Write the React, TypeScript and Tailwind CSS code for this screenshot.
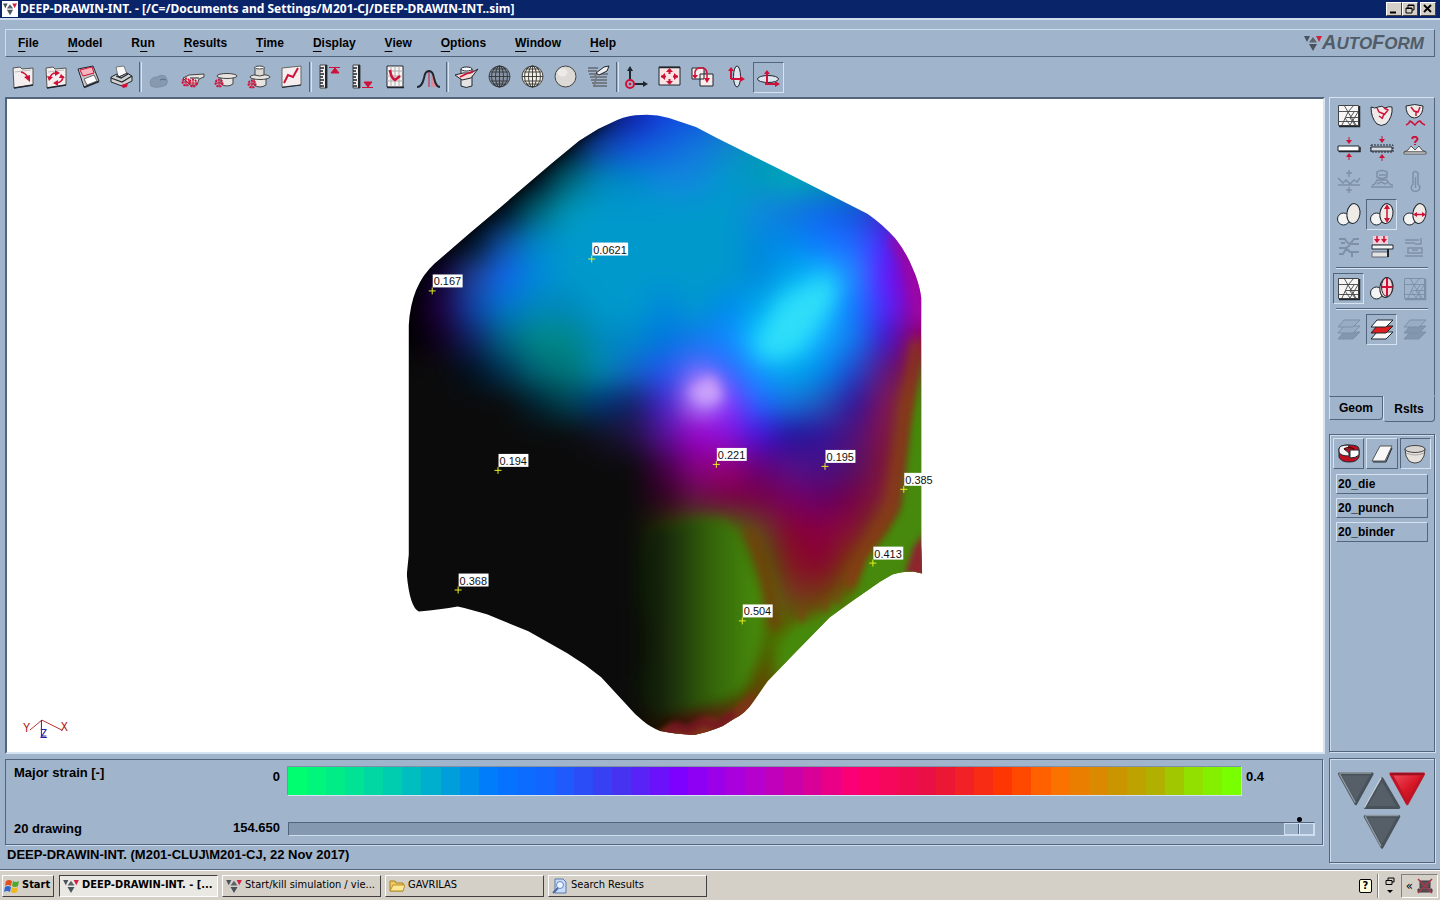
import React from 'react';

const RED = '#d01038';
const INK = '#20262e';
const DIM = '#7d90a8';

const menus = [
  { label: 'File', key: 0 },
  { label: 'Model', key: 0 },
  { label: 'Run', key: 1 },
  { label: 'Results', key: 0 },
  { label: 'Time', key: 0 },
  { label: 'Display', key: 0 },
  { label: 'View', key: 0 },
  { label: 'Options', key: 0 },
  { label: 'Window', key: 0 },
  { label: 'Help', key: 0 },
];

const Icon: React.FC<{ children: React.ReactNode }> = ({ children }) => (
  <svg viewBox="0 0 26 26" className="h-[26px] w-[26px] shrink-0" fill="none" stroke={INK} strokeWidth="1" aria-hidden="true">
    {children}
  </svg>
);

const Gear = ({ x, y }: { x: number; y: number }) => (
  <g stroke={RED}>
    <circle cx={x} cy={y} r="3.5" strokeWidth="2" strokeDasharray="2 1" />
    <path d={`M${x - 4} ${y}h8M${x} ${y - 4}v8`} />
  </g>
);

const Folder = ({ children }: { children: React.ReactNode }) => (
  <Icon>
    <path d="M3 4l7-1 2 2 11-1v17L4 24z" fill="#f4efee" stroke="#555" />
    <path d="M4 24l19-3" strokeWidth="1.5" />
    <path d="M5 8l16-2" stroke="#bbb" />
    {children}
  </Icon>
);

const Ruler = ({ up }: { up?: boolean }) => (
  <Icon>
    <path d="M3 1h7v23H3z" fill="#eee" stroke="#444" />
    <path d="M9 1v23" strokeWidth="2" />
    <path d="M3 4h4M3 7h3M3 10h4M3 13h3M3 16h4M3 19h3M3 22h4" strokeWidth="1.5" />
    {up ? (
      <path d="M12 3.500h11M14 9h8l-4-5z" stroke={RED} fill={RED} />
    ) : (
      <path d="M12 23.500h11M14 18h8l-4 5z" stroke={RED} fill={RED} />
    )}
  </Icon>
);

const Globe = ({ fill, line }: { fill: string; line: boolean }) => (
  <Icon>
    <circle cx="12.500" cy="12.500" r="10.500" fill={fill} stroke="#444" />
    {line ? (
      <g stroke="#333" strokeWidth="0.9">
        <ellipse cx="12.500" cy="12.500" rx="4" ry="10.500" />
        <ellipse cx="12.500" cy="12.500" rx="8" ry="10.500" />
        <path d="M12.500 2v21M2 12.500h21M3.500 8h18M3.500 17h18M6 5h13M6 20h13" />
      </g>
    ) : (
      <ellipse cx="9.500" cy="8.500" rx="5" ry="4" fill="#eceae8" stroke="none" />
    )}
  </Icon>
);

const Mesh = ({ dim }: { dim?: boolean }) => (
  <Icon>
    <path d="M2.500 2.500h20v20h-20z" fill={dim ? 'none' : '#f6f6f6'} stroke={dim ? DIM : '#444'} />
    <path
      d="M2 8.500h20M10 14.500h12M2 18.500h20M8 2l4 7-6 13M18 2l-6 7M12 9l8 13M22 9l-8 13M18 9l-4 6 5 7M9 15l5 7"
      stroke={dim ? DIM : '#444'}
      strokeWidth="0.9"
    />
    <path d="M23.500 3v20.500H3" strokeWidth="1.500" stroke={dim ? DIM : INK} />
  </Icon>
);

const Balls = ({ children }: { children?: React.ReactNode }) => (
  <Icon>
    <circle cx="7.500" cy="17" r="6" fill="#f4f4f4" />
    <ellipse cx="17.500" cy="11.500" rx="6.500" ry="10" fill="#eeeae6" transform="rotate(8 17 11)" />
    {children}
  </Icon>
);

const Layers = ({ mid, dim }: { mid: string; dim?: boolean }) => (
  <Icon>
    <g stroke={dim ? DIM : INK}>
      <path d="M2 22l6-7h16l-7 7z" fill={dim ? '#8398af' : '#f6f6f6'} />
      <path d="M2 16l6-7h16l-7 7z" fill={mid} />
      <path d="M2 10l6-7h16l-7 7z" fill={dim ? '#98acc4' : '#fff'} />
    </g>
  </Icon>
);

const Cup = ({ y, w }: { y: number; w: number }) => (
  <g stroke="#444" fill="#e8e4e2">
    <path d={`M8 ${y}v8q6 4 12 0v-8z`} />
    <ellipse cx="14" cy={y} rx={w} ry="2.500" />
  </g>
);

interface Tool {
  name: string;
  icon: React.ReactNode;
  sunken?: boolean;
}

const toolGroups: Tool[][] = [
  [
    { name: 'Open', icon: <Folder><path d="M11 8q5 1 7 6" stroke={RED} strokeWidth="1.500" /><path d="M14 13l6-2v7z" fill={RED} stroke="none" /></Folder> },
    { name: 'Reload', icon: <Folder><path d="M7 14q1-5 6-5M20 12q0 6-6 7" stroke={RED} strokeWidth="1.500" /><path d="M12 6l5 3-5 3zM15 22l-5-3 5-3zM4 12l6 1-4 4zM18 10l4 4-6 0z" fill={RED} stroke="none" /></Folder> },
    {
      name: 'Save',
      icon: (
        <Icon>
          <path d="M2 5l15-3 6 15-15 6z" fill="#c9c4c6" />
          <path d="M4 6l12-3 2 6-11 3z" fill="#f6b4be" stroke={RED} />
          <path d="M8 15l10-4 3 6-10 4z" fill="#fff" stroke="#666" />
          <path d="M8 23.500l15-6" strokeWidth="1.500" />
        </Icon>
      ),
    },
    {
      name: 'Print',
      icon: (
        <Icon>
          <path d="M7 3l8-1 3 8-9 3z" fill="#f8f8f8" stroke="#777" />
          <path d="M2 13l6-3 2 3 8-4 5 3v5l-10 5-11-4z" fill="#d0d0d0" />
          <path d="M2 14l11 4 10-6M7 12l5 2 7-4" strokeWidth="1.200" />
          <path d="M12 21l7-2-1 4-4 1z" fill={RED} stroke="none" />
        </Icon>
      ),
    },
  ],
  [
    { name: 'Blank', icon: <Icon><path d="M3 18q1-5 7-5 4-3 8-1 4 5 1 9-9 4-15 1z" fill="#8699ae" stroke={DIM} /><path d="M13 16q3-2 6 0" stroke="#5d6e82" /></Icon> },
    { name: 'Draw tool', icon: <Icon><path d="M3 14l6-3 15-1v3l-5 2-2 6h-7z" fill="#e8e4e2" stroke="#444" /><path d="M10 14h9" /><Gear x={6} y={18} /><Gear x={13} y={19} /></Icon> },
    { name: 'Binder', icon: <Icon><Cup y={12} w={10} /><Gear x={6} y={19} /></Icon> },
    { name: 'Punch', icon: <Icon><Cup y={13} w={10} /><path d="M9 3h9v8q-4 2-9 0z" fill="#dcd8d4" stroke="#444" /><ellipse cx="13.500" cy="3.500" rx="4.500" ry="1.500" fill="#fff" stroke="#444" /><Gear x={6} y={20} /></Icon> },
    { name: 'Curve', icon: <Icon><path d="M3 4l19-2v19L3 23z" fill="#f4eeee" stroke="#666" /><path d="M3 23.500l19-2.500" /><path d="M5 19l4-8 5 2 5-9" stroke={RED} strokeWidth="2" /></Icon> },
  ],
  [
    { name: 'Maximum', icon: <Ruler up /> },
    { name: 'Minimum', icon: <Ruler /> },
    {
      name: 'Forming limit',
      icon: (
        <Icon>
          <path d="M4 2h16v21H4z" fill="#f8f4f4" />
          <path d="M8 2v21M12 2v21M16 2v21M4 7h16M4 12h16M4 17h16" stroke="#aaa" />
          <path d="M7 6q1 8 5 10l5-4" stroke={RED} strokeWidth="2.500" />
          <path d="M4 23.500h17" strokeWidth="1.500" />
        </Icon>
      ),
    },
    { name: 'Distribution', icon: <Icon><path d="M15 8v15h6z" fill="#e08c98" stroke="none" /><path d="M13 6v17" stroke={RED} /><path d="M1 23q5 0 7-9 1-7 5-7t5 7q2 9 6 9" strokeWidth="2" /></Icon> },
  ],
  [
    { name: 'Section', icon: <Icon><path d="M7 5v17q5 3 11 0V5" fill="#e4e4e4" /><ellipse cx="12.500" cy="5" rx="5.500" ry="2" fill="#fff" /><path d="M1 11l8-2 8 0 7-4-7 9-9 2z" fill="#f2dcd8" /><path d="M6 13l6-3 8-3" stroke={RED} strokeWidth="1.500" /></Icon> },
    { name: 'Shaded mesh', icon: <Globe fill="#8593a4" line /> },
    { name: 'Mesh', icon: <Globe fill="#f4f0e0" line /> },
    { name: 'Shaded', icon: <Globe fill="#dddad6" line={false} /> },
    { name: 'Light', icon: <Icon><path d="M2 4h10M2 7h9M3 10h19M4 13h17M5 16h16M6 19h15M7 22h14" stroke="#444" /><path d="M10 9l8-6 5-1-2 5-8 4z" fill="#f0eeee" /><path d="M7 10q4 1 3 5l-2 8" stroke="#777" strokeWidth="1.500" /></Icon> },
  ],
  [
    { name: 'Axes', icon: <Icon><path d="M6 16V5M10 20h10" strokeWidth="2" /><path d="M3 7h6L6 2zM19 17v6l5-3z" fill={INK} stroke="none" /><circle cx="6" cy="20" r="4" stroke={RED} strokeWidth="2" /><circle cx="6" cy="20" r="1" fill={RED} stroke={RED} /></Icon> },
    { name: 'Fit', icon: <Icon><path d="M2 3h21v18H2z" fill="#f8e4e4" /><path d="M2 3.500h21" strokeWidth="1.500" /><path d="M12.500 6v4M12.500 15v4M4 12.500h5M16 12.500h5" stroke={RED} strokeWidth="2" /><path d="M9 8h7l-3.500-4zM9 17h7l-3.500 4zM8 9v7l-4-3.500zM17 9v7l4-3.500z" fill={RED} stroke="none" /></Icon> },
    { name: 'Pan', icon: <Icon><path d="M2 4h12v11H2zM10 10h13v12H10z" fill="#f8ecec" /><path d="M5 12V8q1-4 5-4h3q4 1 4 6v6" stroke={RED} strokeWidth="1.500" /><path d="M2 11h6l-3 4zM14 14h6l-3 5z" fill={RED} stroke="none" /></Icon> },
    { name: 'Rotate', icon: <Icon><ellipse cx="14" cy="12.500" rx="3.500" ry="10.500" fill="#dfe6ee" /><path d="M8 15V6M8 15h11" stroke={RED} strokeWidth="2" /><path d="M5 7h6L8 3zM17 12v6l5-3z" fill={RED} stroke="none" /></Icon> },
    { name: 'Spin', sunken: true, icon: <Icon><ellipse cx="12" cy="15" rx="10.500" ry="3.500" fill="#dfe6ee" /><path d="M11 19V9M9 20h11" stroke={RED} strokeWidth="2" /><path d="M8 10h6l-3-4zM19 17v6l5-3z" fill={RED} stroke="none" /></Icon> },
  ],
];

const resultTools: Tool[] = [
  { name: 'Mesh grid', icon: <Mesh /> },
  { name: 'Failure', icon: <Icon><path d="M2 4q4 2 7 0 4-2 7 1 4-2 7-1 1 10-6 17-5 3-9 0Q2 15 2 4z" fill="#eeeae8" /><path d="M8 5l2 4 5 2-2 5M15 5l4 2-4 5M10 13l3 2" stroke={RED} strokeWidth="1.500" /></Icon> },
  { name: 'Wrinkles', icon: <Icon><path d="M4 3q9-3 17 0 0 8-5 11-4 2-7 0-5-3-5-11z" fill="#eeeae8" /><path d="M9 4l3 4 4 1 2-5M14 9v4" stroke={RED} strokeWidth="1.500" /><path d="M4 22q3-1 4-4 2 1 5 4 3-4 5-4 2 3 5 4" stroke={RED} strokeWidth="1.500" /></Icon> },
  { name: 'Thickness', icon: <Icon><path d="M2 10h21v5H2z" fill="#fff" /><path d="M3 15.500h21V11" strokeWidth="1.500" /><path d="M13 1v6M13 18v6" stroke={RED} /><path d="M10 4h6l-3 4zM10 21h6l-3-4z" fill={RED} stroke="none" /></Icon> },
  { name: 'Thinning', icon: <Icon><path d="M2 9h22v7H2z" strokeDasharray="2 1" /><path d="M2 11h21v4H2z" fill="#d8dde4" /><path d="M13 0v6M13 19v6" stroke={RED} /><path d="M10 3h6l-3 4zM10 22h6l-3-4z" fill={RED} stroke="none" /></Icon> },
  { name: 'Formability', icon: <Icon><path d="M2 16h22l-4-2-3-4-4 4-4-4-3 4z" fill="#f4f4f4" stroke="#555" /><path d="M2 16h22v2H2z" fill="#fff" stroke="#555" /><path d="M10 3q1-3 4-2 3 2 0 4-1 1-1 2M13 8v1" stroke={RED} strokeWidth="2" /></Icon> },
  { name: 'Sheet contact', icon: <Icon><path d="M2 9l5 5 3-3 4 4 4-4 3 2 3-4M2 16h22M13 1v7M13 18v6M10 4h6M10 21h6" stroke={DIM} strokeWidth="1.500" /></Icon> },
  { name: 'Pressure', icon: <Icon><path d="M8 3q5-3 10 0v5q-5 3-10 0zM3 16q3 0 5-5h10q2 5 6 5M2 18h22M10 6h7M8 15l4-2 4 2 3-2" stroke={DIM} strokeWidth="1.500" /></Icon> },
  { name: 'Temperature', icon: <Icon><path d="M11 4q2-3 5 0v11q3 3 1 6-4 3-7 0-2-3 1-6zM13.500 8v11" stroke={DIM} strokeWidth="1.500" /></Icon> },
  { name: 'Strain', icon: <Balls /> },
  { name: 'Major strain', sunken: true, icon: <Balls><path d="M18 4v15" stroke={RED} strokeWidth="1.500" /><path d="M15 7h6l-3-5zM15 16h6l-3 5z" fill={RED} stroke="none" /></Balls> },
  { name: 'Minor strain', icon: <Balls><path d="M14 12.500h8" stroke={RED} strokeWidth="1.500" /><path d="M15 10v5l-4-2.500zM20 10v5l4-2.500z" fill={RED} stroke="none" /></Balls> },
  { name: 'Material flow', icon: <Icon><path d="M3 4h6q2 5 7 5h7M14 10l-4 3H3M23 4h-5l-3 4M10 13l4 4h9M3 19h4l3-5M16 16v6M5 8h4" stroke={DIM} strokeWidth="2" /></Icon> },
  { name: 'Forces', icon: <Icon><path d="M4 1h15v8H4z" fill="#f6d0d6" stroke="none" /><path d="M8 1v6M15 1v6" stroke={RED} strokeWidth="1.500" /><path d="M5 4h6l-3 4zM12 4h6l-3 4z" fill={RED} stroke="none" /><path d="M3 10h21v4H3z" fill="#f4f4f4" /><path d="M3 17h16v5H3z" fill="#e4e4e4" stroke="#667" /><path d="M19 14v8" strokeWidth="2" /></Icon> },
  { name: 'Draw-in', icon: <Icon><path d="M3 5h14M3 8h10M19 3v6h-6M6 13h14v5H6zM3 21h18M10 15h6" stroke={DIM} strokeWidth="1.500" /></Icon> },
];

const displayTools: Tool[] = [
  { name: 'Show mesh', sunken: true, icon: <Mesh /> },
  { name: 'Principal strain', icon: <Balls><ellipse cx="18" cy="11" rx="5.500" ry="9.500" fill="#fbd8dc" /><path d="M18 2v18M12.500 11h11" stroke={RED} strokeWidth="2" /></Balls> },
  { name: 'Hide mesh', icon: <Mesh dim /> },
];

const layerTools: Tool[] = [
  { name: 'Lower layer', icon: <Layers mid="#98acc4" dim /> },
  { name: 'Middle layer', sunken: true, icon: <Layers mid="#e02020" /> },
  { name: 'Upper layer', icon: <Layers mid="#8398af" dim /> },
];

const partTools: Tool[] = [
  { name: 'Die', icon: <Icon><path d="M3 8q0-4 10-4t10 4v8q-2 5-10 5T3 16z" fill="#c01020" /><path d="M3 8q0-4 10-4l-1 4H8l5 4v3Q4 15 3 11z" fill="#f4f4f4" /><path d="M14 9h9v5q-3 3-9 3z" fill="#fff" /><path d="M8 8q5-3 10 0" stroke="#600" strokeWidth="1.500" /></Icon> },
  { name: 'Sheet', icon: <Icon><path d="M3 20l8-15h12l-7 15z" fill="#f8f8f8" stroke="#555" /><path d="M4 21h13l6-14" /></Icon> },
  { name: 'Punch part', sunken: true, icon: <Icon><path d="M3 8q0 8 4 12 6 4 12 0 4-4 4-12z" fill="#e6e2de" stroke="#444" /><ellipse cx="13" cy="8" rx="10" ry="3.500" fill="#d8d4d0" stroke="#444" /><path d="M4 12q9 4 18 0" stroke="#aaa" /></Icon> },
];

const ToolButton: React.FC<{ tool: Tool }> = ({ tool }) => (
  <button
    type="button"
    aria-label={tool.name}
    className={`mx-px flex h-[31px] w-[31px] items-center justify-center border ${
      tool.sunken ? 'border-t-[#53657d] border-r-[#d6e4f2] border-b-[#d6e4f2] border-l-[#53657d]' : 'border-transparent'
    }`}
  >
    {tool.icon}
  </button>
);

const Triangles = ({ className }: { className: string }) => (
  <svg viewBox="0 0 18 16" className={className} aria-hidden="true">
    <path d="M0 1h6L3 7z" fill="#4a525c" />
    <path d="M12 1h6l-3 6z" fill="#d02040" />
    <path d="M5 7.500h8L9 2z" fill="#5a626c" />
    <path d="M5 9h8l-4 7z" fill="#4a525c" />
  </svg>
);

const TitleBar = () => (
  <header className="flex h-[18px] items-center bg-[#0a246a] pr-1 pl-[2px] text-white">
    <span className="flex h-4 w-4 items-center justify-center bg-white">
      <Triangles className="h-3.5 w-3.5" />
    </span>
    <h1 className="ml-[2px] flex-1 font-['Noto_Sans','Open_Sans',sans-serif] text-[12px] leading-4 font-bold">
      DEEP-DRAWIN-INT. - [/C=/Documents and Settings/M201-CJ/DEEP-DRAWIN-INT..sim]
    </h1>
    {['Minimize', 'Restore', 'Close'].map(name => (
      <button
        key={name}
        type="button"
        aria-label={name}
        className={`flex h-[14px] w-4 items-center justify-center border border-t-white border-r-[#404040] border-b-[#404040] border-l-white bg-[#d4d0c8] ${
          name === 'Close' ? 'ml-[2px]' : ''
        }`}
      >
        <svg viewBox="0 0 12 10" className="h-[10px] w-3" fill="none" stroke="#000" aria-hidden="true">
          {name === 'Minimize' && <path d="M2 8.500h6" strokeWidth="2" />}
          {name === 'Restore' && <path d="M4 4V1h6v5H8M2 4h6v5H2zM4 1.500h6M2 4.500h6" />}
          {name === 'Close' && <path d="M2 1l7 7M9 1L2 8" strokeWidth="1.800" />}
        </svg>
      </button>
    ))}
  </header>
);

const MenuBar = () => (
  <nav className="mx-[5px] mt-[9px] flex h-7 items-center border border-t-[#cfdeee] border-r-[#53657d] border-b-[#53657d] border-l-[#cfdeee] pr-[10px] pl-3">
    <div className="flex flex-1 gap-[29px]">
      {menus.map(({ label, key }) => (
        <button key={label} type="button" className="font-bold">
          {label.slice(0, key)}
          <span className="underline decoration-1 underline-offset-4">{label[key]}</span>
          {label.slice(key + 1)}
        </button>
      ))}
    </div>
    <Triangles className="h-4 w-[18px]" />
    <span className="text-[20px] leading-6 font-bold text-[#505c68] italic">
      A<span className="text-[17px]">UTO</span>F<span className="text-[17px]">ORM</span>
    </span>
  </nav>
);

const ToolBar = () => (
  <div className="flex h-[40px] items-center pl-[6px]">
    {toolGroups.map((group, i) => (
      <React.Fragment key={i}>
        {i > 0 && <div className="mx-px h-[30px] w-[3px] border-r border-l border-r-[#d6e4f2] border-l-[#53657d]" />}
        {group.map(tool => (
          <ToolButton key={tool.name} tool={tool} />
        ))}
      </React.Fragment>
    ))}
  </div>
);

const markers = [
  { x: 591, y: 258, value: '0.0621' },
  { x: 431, y: 290, value: '0.167' },
  { x: 497, y: 470, value: '0.194' },
  { x: 457, y: 590, value: '0.368' },
  { x: 716, y: 464, value: '0.221' },
  { x: 825, y: 466, value: '0.195' },
  { x: 904, y: 489, value: '0.385' },
  { x: 873, y: 563, value: '0.413' },
  { x: 742, y: 621, value: '0.504' },
];

const OUTLINE =
  'M641 114Q655 113 669 117L696 126L717 137L779 168L868 213Q884 224 896 238Q907 252 913 267Q920 282 922 297V545L923 574L914 572Q902 572 893 575Q880 582 868 591L855 600L830 618L792 657L768 682L754 702Q746 714 734 720L723 727Q706 734 694 736Q675 735 660 732Q650 728 643 722L635 715L626 705L601 678Q585 665 567 654L528 632L487 615Q470 610 457 607Q440 610 418 612Q409 608 406 575L408 555V325Q410 285 434 263L470 232L496 210L551 163L579 140L598 128L617 119Q629 114 641 114Z';

// shaded strain colours sampled on a 32 unit grid, first point at (408, 115)
const STEP = 32;
const UNLIT = '---';
const field = [
  '000 000 000 000 000 000 014 12a 14d 15d 16c 18b 18b 18b 18b 18b 18b',
  '000 000 000 000 000 012 14a 15d 16d 17d 18c 09b 09b 09a 09a 09a 09a',
  '000 000 000 000 012 067 08b 08c 18d 18d 09c 09b 0ab 09a 089 089 089',
  '000 000 000 012 067 09b 09c 09c 09c 09c 09c 18d 17d 16e 15d 42b 42b',
  '000 000 012 15a 08c 09c 09c 09c 09c 09c 09c 08d 08e 17f 26f 52f 708',
  '000 103 249 16e 08d 09c 09c 09c 09c 09c 09c 08d 0ae 1bf 28f 61f 909',
  '000 204 14a 07c 08b 08b 09c 09c 08d 09c 08e 0ae 2df 1bf 17f 52f 90a',
  '000 102 126 068 088 088 08b 08c 07d 17e 18f 1cf 2df 1af 17e 41c 905',
  '--- --- 012 035 067 077 08a 16c 25e 66f 36f 19f 0ae 08e 24c 617 813',
  '--- --- --- --- 023 045 037 126 42c a6e 83f 26f 17d 25b 319 815 750',
  '--- --- --- --- --- --- 112 214 519 90c 81d 41d 219 319 517 814 560',
  '--- --- --- --- --- --- --- --- 404 808 907 607 518 418 516 813 570',
  '--- --- --- --- --- --- --- --- 302 614 704 704 706 606 704 823 480',
  '--- --- --- --- --- --- --- --- 230 360 470 642 803 804 813 650 480',
  '--- --- --- --- --- --- --- --- 130 250 370 460 812 803 740 480 480',
  '--- --- --- --- --- --- --- --- 130 250 370 480 732 731 570 480 480',
  '--- --- --- --- --- --- --- --- 120 250 370 470 560 570 480 480 480',
  '--- --- --- --- --- --- --- --- 120 250 370 550 480 480 480 480 480',
  '--- --- --- --- --- --- --- --- 130 250 360 640 640 640 640 640 640',
  '--- --- --- --- --- --- --- --- 210 511 621 640 640 640 640 640 640',
].map(row => row.split(' '));

const FieldCells = () => {
  const cells: React.ReactNode[] = [];
  // one extra ring on every side keeps the blur from fading at the border
  for (let j = -1; j <= field.length; j++) {
    const row = field[Math.min(Math.max(j, 0), field.length - 1)];
    for (let i = -1; i <= row.length; i++) {
      const color = row[Math.min(Math.max(i, 0), row.length - 1)];
      cells.push(
        <rect
          key={`${i},${j}`}
          x={392 + i * STEP}
          y={99 + j * STEP}
          width={STEP + 1}
          height={STEP + 1}
          fill={color === UNLIT ? '#0b0b0b' : `#${color}`}
        />
      );
    }
  }
  return <>{cells}</>;
};

const Blur = ({ id, size }: { id: string; size: number }) => (
  <filter id={id} filterUnits="userSpaceOnUse" x="300" y="0" width="760" height="860" colorInterpolationFilters="sRGB">
    <feGaussianBlur stdDeviation={size} />
  </filter>
);

const StrainModel = () => (
  <svg viewBox="6 98 1318 655" className="absolute inset-0 h-full w-full" role="img" aria-label="Major strain on the drawn part">
    <defs>
      <clipPath id="part">
        <path d={OUTLINE} />
      </clipPath>
      <Blur id="soft" size={14} />
      <Blur id="b3" size={3} />
      <Blur id="b6" size={6} />
      <Blur id="b10" size={10} />
      <linearGradient id="corner" gradientUnits="userSpaceOnUse" x1="644" y1="0" x2="755" y2="0">
        <stop offset="0" stopColor="#0c100a" />
        <stop offset="0.25" stopColor="#1c300c" />
        <stop offset="0.6" stopColor="#34640a" />
        <stop offset="1" stopColor="#46890c" />
      </linearGradient>
    </defs>

    <g clipPath="url(#part)">
      <g filter="url(#soft)">
        <FieldCells />
      </g>

      {/* stretched corner and flange */}
      <path d="M748 530Q768 575 774 630" stroke="#74400c" strokeWidth="14" fill="none" filter="url(#b6)" />
      <path d="M650 532L695 520Q730 516 740 536Q757 570 764 620Q762 660 744 690Q715 706 650 716z" fill="url(#corner)" filter="url(#b6)" />
      <path d="M918 340L904 430L893 505L870 545L848 588" stroke="#8a3a18" strokeWidth="12" fill="none" filter="url(#b6)" />
      <path d="M924 350L912 430L903 510L888 535L868 560L858 590L845 606L930 590z" fill="#46890c" filter="url(#b3)" />
      <path d="M780 645L795 625L818 618L850 590L840 625L775 690z" fill="#468a0c" filter="url(#b6)" />
      <path d="M926 532L914 548L906 574L926 580z" fill="#8e2430" filter="url(#b3)" />
      <path d="M655 735L672 725L690 730L706 718L722 723L738 706L756 690L750 725L695 745z" fill="#7e3418" filter="url(#b3)" />
      <path d="M664 738L676 726L686 732L704 722L716 728L734 714" stroke="#741024" strokeWidth="6" fill="none" filter="url(#b3)" />
      <path d="M802 606V622M826 596V612M838 590V604" stroke="#7a4412" strokeWidth="5" filter="url(#b3)" />

      {/* highlights */}
      <ellipse cx="798" cy="318" rx="52" ry="18" fill="#30def8" filter="url(#b10)" transform="rotate(-47 798 318)" />
      <ellipse cx="706" cy="392" rx="17" ry="19" fill="#b888fa" filter="url(#b10)" />
      <path d="M712 376L722 398L704 404L690 392z" fill="#caa2fa" filter="url(#b6)" />
      <path d="M893 236Q916 262 921 320" stroke="#a008a0" strokeWidth="10" fill="none" filter="url(#b6)" />

      {/* edge turning away from the light */}
      <path d="M604 116L575 136L545 161L490 208L430 256L408 290" stroke="#03040a" strokeWidth="10" fill="none" filter="url(#b6)" />
    </g>

    {markers.map(({ x, y, value }) => (
      <g key={value}>
        <path d={`M${x - 3} ${y + 0.5}h7M${x + 0.5} ${y - 3}v7`} stroke="#e8f020" />
        <rect x={x + 1} y={y - 16} width={value.length * 6} height="13" fill="#fff" />
        <text x={x + 2} y={y - 5} fontSize="11" fill="#111">
          {value}
        </text>
      </g>
    ))}

    {/* axis triad */}
    <path d="M28 731L40 721L60 731" stroke="#b83030" fill="none" />
    <path d="M39.500 721v16h5" stroke="#2020a0" fill="none" />
    <g fontSize="12" className="font-['Liberation_Mono',monospace]">
      <text x="21" y="733" fill="#b02020">Y</text>
      <text x="59" y="732" fill="#b02020">X</text>
      <text x="38" y="739" fill="#2020a0">Z</text>
    </g>
  </svg>
);

const stops: [number, number[]][] = [
  [0, [0, 255, 112]],
  [0.05, [0, 232, 140]],
  [0.1, [0, 205, 175]],
  [0.15, [0, 170, 210]],
  [0.21, [0, 120, 255]],
  [0.27, [20, 100, 255]],
  [0.34, [64, 56, 240]],
  [0.41, [128, 0, 255]],
  [0.48, [176, 0, 215]],
  [0.54, [208, 0, 160]],
  [0.6, [255, 0, 112]],
  [0.68, [232, 16, 64]],
  [0.76, [255, 56, 0]],
  [0.81, [255, 112, 0]],
  [0.87, [208, 144, 0]],
  [0.92, [176, 176, 0]],
  [0.96, [144, 225, 0]],
  [1, [120, 255, 0]],
];

const BANDS = 50;

function bandColor(t: number) {
  const i = Math.max(1, stops.findIndex(([pos]) => pos >= t));
  const [p0, c0] = stops[i - 1];
  const [p1, c1] = stops[i];
  const f = (t - p0) / (p1 - p0);
  return `rgb(${c0.map((c, k) => Math.round(c + (c1[k] - c) * f)).join(',')})`;
}

const LegendPanel = () => (
  <section className="mt-[5px] mr-[2px] flex h-[86px] flex-col justify-between border border-[#53657d] pt-[6px] pr-[7px] pb-2 pl-2 text-[13px] shadow-[1px_1px_0_#cfdeee]">
    <div className="flex">
      <div className="w-[170px] leading-[14px]">Major strain [-]</div>
      <div className="w-[96px] pt-[4px] text-right leading-[14px]">0</div>
      <div className="ml-[7px] flex h-[30px] flex-1 border border-t-[#7d90a8] border-r-[#d6e4f2] border-b-[#d6e4f2] border-l-[#7d90a8]">
        {Array.from({ length: BANDS }, (_, i) => (
          <div key={i} className="flex-1" style={{ background: bandColor(i / (BANDS - 1)) }} />
        ))}
      </div>
      <div className="w-[73px] pt-[4px] pl-1 leading-[14px]">0.4</div>
    </div>
    <div className="flex items-end">
      <label htmlFor="time" className="w-[170px] leading-[14px]">
        20 drawing
      </label>
      <div className="w-[96px] text-right leading-[16px]">154.650</div>
      <div className="ml-2 flex flex-1 flex-col items-end">
        <span className="mr-[13px] h-[5px] w-[5px] rounded-full bg-black" />
        <input
          id="time"
          type="range"
          min="0"
          max="154.65"
          step="0.01"
          defaultValue="154.65"
          className="block h-[14px] w-full appearance-none border border-t-[#53657d] border-r-[#cfdeee] border-b-[#cfdeee] border-l-[#53657d] bg-[#8499b0] [&::-webkit-slider-thumb]:h-[12px] [&::-webkit-slider-thumb]:w-[30px] [&::-webkit-slider-thumb]:appearance-none [&::-webkit-slider-thumb]:border [&::-webkit-slider-thumb]:border-[#cfdeee] [&::-webkit-slider-thumb]:bg-[linear-gradient(90deg,#a0b4cb_13px,#53657d_13px,#53657d_14px,#d6e4f2_14px,#d6e4f2_15px,#a0b4cb_15px)]"
        />
      </div>
    </div>
  </section>
);

const ToolGrid = ({ tools }: { tools: Tool[] }) => (
  <div className="grid grid-cols-3 gap-y-[2px]">
    {tools.map(tool => (
      <ToolButton key={tool.name} tool={tool} />
    ))}
  </div>
);

const Divider = () => <hr className="mx-1 my-1 h-[2px] border-t border-b border-t-[#53657d] border-b-[#d6e4f2]" />;

const SidePanel = () => (
  <aside className="mr-[5px] ml-1 flex w-[106px] flex-col pb-[6px]">
    <section className="flex h-[299px] flex-col border border-t-[#d6e4f2] border-r-[#53657d] border-b-transparent border-l-[#d6e4f2] px-[2px] pt-[2px]">
      <ToolGrid tools={resultTools} />
      <Divider />
      <ToolGrid tools={displayTools} />
      <Divider />
      <ToolGrid tools={layerTools} />
    </section>
    <div role="tablist" className="flex h-[26px] items-start font-bold">
      <button
        type="button"
        role="tab"
        aria-selected="false"
        className="h-6 w-[54px] rounded-br border border-t-[#53657d] border-r-[#53657d] border-b-[#53657d] border-l-[#d6e4f2]"
      >
        Geom
      </button>
      <button
        type="button"
        role="tab"
        aria-selected="true"
        className="h-[26px] flex-1 rounded-b border border-t-transparent border-r-[#53657d] border-b-[#53657d] border-l-[#d6e4f2]"
      >
        Rslts
      </button>
    </div>
    <section className="mt-3 flex flex-1 flex-col border border-[#53657d] px-[2px] pt-[3px] shadow-[inset_1px_1px_0_#cfdeee,1px_1px_0_#cfdeee]">
      <div className="grid grid-cols-3">
        {partTools.map(tool => (
          <button
            key={tool.name}
            type="button"
            aria-label={tool.name}
            className={`mx-px flex h-[31px] items-center justify-center border ${
              tool.sunken
                ? 'border-t-[#53657d] border-r-[#d6e4f2] border-b-[#d6e4f2] border-l-[#53657d]'
                : 'border-t-[#d6e4f2] border-r-[#53657d] border-b-[#53657d] border-l-[#d6e4f2]'
            }`}
          >
            {tool.icon}
          </button>
        ))}
      </div>
      <div className="mx-1 mt-[5px] flex flex-col gap-1">
        {['20_die', '20_punch', '20_binder'].map(part => (
          <button
            key={part}
            type="button"
            className="h-5 border border-t-[#d6e4f2] border-r-[#53657d] border-b-[#53657d] border-l-[#d6e4f2] pl-px text-left font-bold"
          >
            {part}
          </button>
        ))}
      </div>
    </section>
    <section className="mt-[6px] h-[105px] border border-[#53657d] p-[7px] shadow-[inset_1px_1px_0_#cfdeee,1px_1px_0_#cfdeee]">
      <svg viewBox="0 0 90 90" className="h-full w-full" strokeLinejoin="round" strokeWidth="3" aria-hidden="true">
        <defs>
          <linearGradient id="red" x1="0" y1="0" x2="1" y2="1">
            <stop offset="0" stopColor="#f05060" />
            <stop offset="0.5" stopColor="#d81828" />
            <stop offset="1" stopColor="#a80818" />
          </linearGradient>
        </defs>
        <path d="M2 8h33L18.500 38z" fill="#565f67" stroke="#48525a" />
        <path d="M2 7h32M2 8l16 29" stroke="#8c979f" strokeWidth="1.500" />
        <path d="M54 8h33L70.500 38z" fill="url(#red)" stroke="#c01424" />
        <path d="M54 8h33" stroke="#901020" strokeWidth="1.500" />
        <path d="M28 42h34L45 13z" fill="#565f67" stroke="#48525a" />
        <path d="M27 42L44 12" stroke="#c4ced8" strokeWidth="1.500" />
        <path d="M28 51h34L45 82z" fill="#565f67" stroke="#48525a" />
        <path d="M28 50h34M28 51l16 30" stroke="#8c979f" strokeWidth="1.500" />
      </svg>
    </section>
  </aside>
);

const FolderGlyph = () => (
  <svg viewBox="0 0 16 16" className="h-4 w-4 shrink-0" aria-hidden="true">
    <path d="M1 13V3h5l1 2h7v8z" fill="#f0cc60" stroke="#a88020" />
    <path d="M1 13l3-6h12l-2 6z" fill="#fce890" stroke="#b89030" />
  </svg>
);

const SearchGlyph = () => (
  <svg viewBox="0 0 16 16" className="h-4 w-4 shrink-0" aria-hidden="true">
    <path d="M3 1h8l3 3v11H3z" fill="#c8dcf8" stroke="#5878b0" />
    <circle cx="8" cy="7" r="3.500" fill="#e8f4ff" stroke="#6888c0" />
    <path d="M6 10l-5 5" stroke="#4868a8" strokeWidth="2" />
  </svg>
);

const tasks = [
  { label: 'DEEP-DRAWIN-INT. - [...', icon: <Triangles className="h-3.5 w-4 shrink-0" />, active: true },
  { label: 'Start/kill simulation / vie...', icon: <Triangles className="h-3.5 w-4 shrink-0" /> },
  { label: 'GAVRILAS', icon: <FolderGlyph /> },
  { label: 'Search Results', icon: <SearchGlyph /> },
];

const TaskBar = () => (
  <footer className="flex h-[30px] items-center gap-1 border-t border-white bg-[#d4d0c8] px-[2px] font-['DejaVu_Sans_Condensed','DejaVu_Sans',sans-serif] text-[11px] text-black">
    <button
      type="button"
      className="mr-px flex h-[22px] w-[52px] items-center gap-[2px] border border-t-white border-r-[#404040] border-b-[#404040] border-l-white pl-px font-bold"
    >
      <svg viewBox="0 0 16 16" className="h-4 w-4 shrink-0" aria-hidden="true">
        <path d="M2 3q3-2 6 0L7 8Q4 6 1 8z" fill="#e05020" />
        <path d="M9 3q3 2 6 0l-1 5q-3 2-6 0z" fill="#50a830" />
        <path d="M1 9q3-2 6 0l-1 5q-3-2-6 0z" fill="#3068d0" />
        <path d="M8 9q3 2 6 0l-1 5q-3 2-6 0z" fill="#f0b820" />
      </svg>
      Start
    </button>
    {tasks.map(({ label, icon, active }) => (
      <button
        key={label}
        type="button"
        className={`flex h-[22px] w-[159px] items-center gap-[3px] overflow-hidden border pl-[3px] whitespace-nowrap ${
          active
            ? 'border-t-[#404040] border-r-white border-b-white border-l-[#404040] bg-[#eae8e3] font-bold'
            : 'border-t-white border-r-[#404040] border-b-[#404040] border-l-white'
        }`}
      >
        {icon}
        {label}
      </button>
    ))}
    <div className="ml-auto flex items-center">
      <span className="mr-[5px] flex h-[14px] w-[13px] items-center justify-center rounded-[2px] border border-black bg-[#ffffe1] text-[11px] leading-3 font-bold">?</span>
      <span className="h-6 w-[2px] border-r border-l border-r-white border-l-[#808080]" />
      <svg viewBox="0 0 10 18" className="mx-[6px] h-[18px] w-[10px]" fill="none" stroke="#000" aria-hidden="true">
        <path d="M3 4V1h6v4H7M1 3.500h6v4H1z" />
        <path d="M2 13h6l-3 3z" fill="#000" stroke="none" />
      </svg>
      <div className="flex h-6 items-center gap-1 border border-t-[#808080] border-r-white border-b-white border-l-[#808080] px-1">
        <span className="text-[13px]">«</span>
        <svg viewBox="0 0 16 16" className="h-4 w-4" aria-hidden="true">
          <path d="M3 3h10v7H3zM1 11h14v3H1z" fill="#5c5058" stroke="#403840" />
          <path d="M1 1l14 14M15 1L1 15" stroke="#a83848" strokeWidth="1.500" />
        </svg>
      </div>
    </div>
  </footer>
);

export default function App() {
  return (
    <div className="flex h-screen flex-col overflow-hidden bg-[#a0b4cb] font-['Liberation_Sans',Arial,sans-serif] text-[12px] text-black">
      <TitleBar />
      <div className="flex min-h-0 flex-1 flex-col border-t-2 border-b border-t-[#cfdeee] border-b-[#53657d]">
        <MenuBar />
        <ToolBar />
        <div className="flex min-h-0 flex-1">
          <main className="ml-[5px] flex min-w-0 flex-1 flex-col font-bold">
            <div className="relative min-h-0 flex-1 border-2 border-t-[#53657d] border-r-[#d6e4f2] border-b-[#d6e4f2] border-l-[#53657d] bg-white font-normal">
              <StrainModel />
            </div>
            <LegendPanel />
            <p className="h-6 pt-[3px] pl-[2px] text-[13px] leading-[14px]">DEEP-DRAWIN-INT. (M201-CLUJ\M201-CJ, 22 Nov 2017)</p>
          </main>
          <SidePanel />
        </div>
      </div>
      <TaskBar />
    </div>
  );
}
